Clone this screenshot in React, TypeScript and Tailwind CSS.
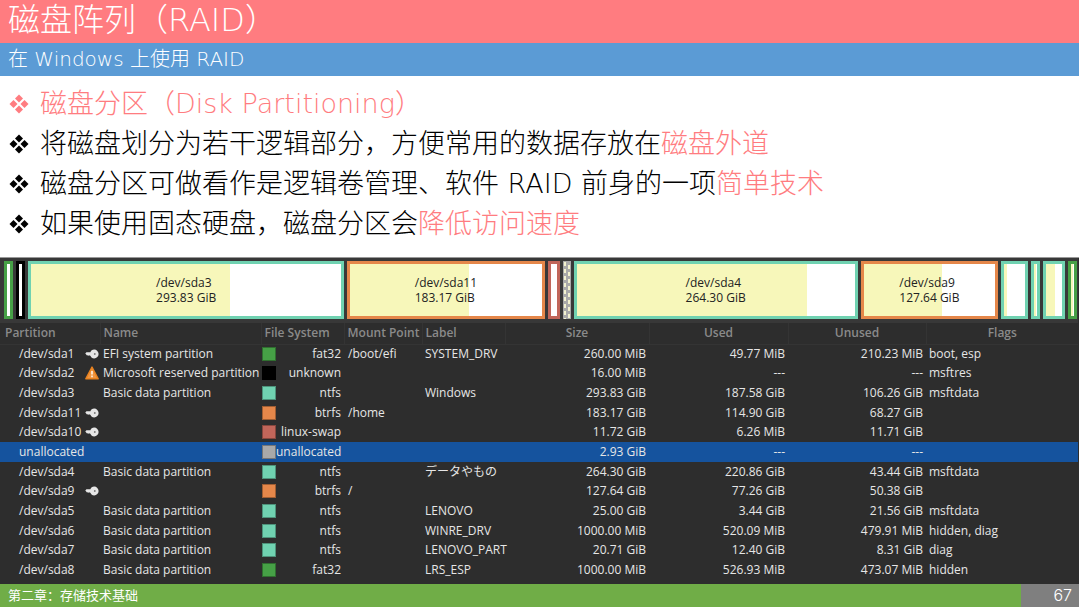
import { useState } from 'react'

// ── Data ──────────────────────────────────────────────────────────────────────

type Partition = {
  device: string
  icon?: 'key' | 'warning'
  name?: string
  color: string
  fs: string
  mount?: string
  label?: string
  size: string
  used: string
  unused: string
  flags?: string
}

const GREEN = 'bg-[#46a046]'
const TEAL = 'bg-[#70d2b1]'
const ORANGE = 'bg-[#e5874a]'
const RED = 'bg-[#c1665a]'

const PARTITIONS: Partition[] = [
  { device: '/dev/sda1', icon: 'key', name: 'EFI system partition', color: GREEN, fs: 'fat32', mount: '/boot/efi', label: 'SYSTEM_DRV', size: '260.00 MiB', used: '49.77 MiB', unused: '210.23 MiB', flags: 'boot, esp' },
  { device: '/dev/sda2', icon: 'warning', name: 'Microsoft reserved partition', color: 'bg-black', fs: 'unknown', size: '16.00 MiB', used: '---', unused: '---', flags: 'msftres' },
  { device: '/dev/sda3', name: 'Basic data partition', color: TEAL, fs: 'ntfs', label: 'Windows', size: '293.83 GiB', used: '187.58 GiB', unused: '106.26 GiB', flags: 'msftdata' },
  { device: '/dev/sda11', icon: 'key', color: ORANGE, fs: 'btrfs', mount: '/home', size: '183.17 GiB', used: '114.90 GiB', unused: '68.27 GiB' },
  { device: '/dev/sda10', icon: 'key', color: RED, fs: 'linux-swap', size: '11.72 GiB', used: '6.26 MiB', unused: '11.71 GiB' },
  { device: 'unallocated', color: 'bg-[#a9a9a9]', fs: 'unallocated', size: '2.93 GiB', used: '---', unused: '---' },
  { device: '/dev/sda4', name: 'Basic data partition', color: TEAL, fs: 'ntfs', label: 'データやもの', size: '264.30 GiB', used: '220.86 GiB', unused: '43.44 GiB', flags: 'msftdata' },
  { device: '/dev/sda9', icon: 'key', color: ORANGE, fs: 'btrfs', mount: '/', size: '127.64 GiB', used: '77.26 GiB', unused: '50.38 GiB' },
  { device: '/dev/sda5', name: 'Basic data partition', color: TEAL, fs: 'ntfs', label: 'LENOVO', size: '25.00 GiB', used: '3.44 GiB', unused: '21.56 GiB', flags: 'msftdata' },
  { device: '/dev/sda6', name: 'Basic data partition', color: TEAL, fs: 'ntfs', label: 'WINRE_DRV', size: '1000.00 MiB', used: '520.09 MiB', unused: '479.91 MiB', flags: 'hidden, diag' },
  { device: '/dev/sda7', name: 'Basic data partition', color: TEAL, fs: 'ntfs', label: 'LENOVO_PART', size: '20.71 GiB', used: '12.40 GiB', unused: '8.31 GiB', flags: 'diag' },
  { device: '/dev/sda8', name: 'Basic data partition', color: GREEN, fs: 'fat32', label: 'LRS_ESP', size: '1000.00 MiB', used: '526.93 MiB', unused: '473.07 MiB', flags: 'hidden' },
]

type Block = {
  device: string
  size?: string
  weight: number // share of the disk bar
  used: number // percent
  border: string
}

const BLOCKS: Block[] = [
  { device: '/dev/sda1', weight: 9, used: 0, border: 'border-[#46a046]' },
  { device: '/dev/sda2', weight: 9, used: 0, border: 'border-black' },
  { device: '/dev/sda3', size: '293.83 GiB', weight: 316, used: 64, border: 'border-[#70d2b1]' },
  { device: '/dev/sda11', size: '183.17 GiB', weight: 197, used: 62, border: 'border-[#e5874a]' },
  { device: '/dev/sda10', weight: 12, used: 0, border: 'border-[#c1665a]' },
  { device: 'unallocated', weight: 8, used: 0, border: '' },
  { device: '/dev/sda4', size: '264.30 GiB', weight: 284, used: 83, border: 'border-[#70d2b1]' },
  { device: '/dev/sda9', size: '127.64 GiB', weight: 137, used: 60, border: 'border-[#e5874a]' },
  { device: '/dev/sda5', weight: 27, used: 14, border: 'border-[#70d2b1]' },
  { device: '/dev/sda6', weight: 9, used: 52, border: 'border-[#70d2b1]' },
  { device: '/dev/sda7', weight: 22, used: 55, border: 'border-[#70d2b1]' },
  { device: '/dev/sda8', weight: 9, used: 53, border: 'border-[#46a046]' },
]

const COLUMNS = [
  { title: 'Partition', width: 'w-[100px]', align: 'text-left pl-[5px]' },
  { title: 'Name', width: 'w-[161px]', align: 'text-left pl-[3px]' },
  { title: 'File System', width: 'w-[83px]', align: 'text-left pl-[3px]' },
  { title: 'Mount Point', width: 'w-[78px]', align: 'text-left pl-[3px]' },
  { title: 'Label', width: 'w-[83px]', align: 'text-left pl-[3px]' },
  { title: 'Size', width: 'w-[144px]', align: 'text-center' },
  { title: 'Used', width: 'w-[139px]', align: 'text-center' },
  { title: 'Unused', width: 'w-[138px]', align: 'text-center' },
  { title: 'Flags', width: '', align: 'text-center' },
]

// ── Icons ─────────────────────────────────────────────────────────────────────

function DiamondBullet() {
  return (
    <svg viewBox="0 0 20 20" className="size-5 flex-none" fill="currentColor" aria-hidden>
      <path d="M10 0.5 14 4.5 10 8.5 6 4.5ZM10 11.5 14 15.5 10 19.5 6 15.5ZM4.5 6 8.5 10 4.5 14 0.5 10ZM15.5 6 19.5 10 15.5 14 11.5 10Z" />
    </svg>
  )
}

function KeyIcon() {
  return (
    <svg viewBox="0 0 14 14" className="size-[14px]" aria-hidden>
      <path d="M0.3 6.6 1.4 5.2H5.4C6 3.6 7.2 2.6 9.2 2.6a4.4 4.4 0 0 1 0 8.8C7.2 11.4 6 10.4 5.4 8.8H5L4.4 8.2 3.6 8.8 2.8 8.2 2 8.5Z" fill="#e6e6e6" />
      <circle cx="9.8" cy="7" r="0.9" fill="#777" />
    </svg>
  )
}

function WarningIcon() {
  return (
    <svg viewBox="0 0 14 14" className="size-[14px]" aria-hidden>
      <path d="M7 1 13.2 12.8H0.8Z" fill="#f0953f" stroke="#e8821f" strokeWidth="1.4" strokeLinejoin="round" />
      <path d="M6 5h2v3.6H6zM6 9.6h2v1.7H6z" fill="#fbe0c4" />
    </svg>
  )
}

// ── Slide text ────────────────────────────────────────────────────────────────

function Bullets() {
  return (
    <ul className="flex flex-col px-[9px] pt-2 pb-[13px] text-[27px] leading-10 font-light text-black">
      <li className="flex items-center gap-[11px] text-[#ff7c80]">
        <DiamondBullet />
        <span>磁盘分区（Disk Partitioning）</span>
      </li>
      <li className="flex items-center gap-[11px]">
        <DiamondBullet />
        <span>
          将磁盘划分为若干逻辑部分，方便常用的数据存放在<span className="text-[#ff7c80]">磁盘外道</span>
        </span>
      </li>
      <li className="flex items-center gap-[11px]">
        <DiamondBullet />
        <span>
          磁盘分区可做看作是逻辑卷管理、软件 RAID 前身的一项<span className="text-[#ff7c80]">简单技术</span>
        </span>
      </li>
      <li className="flex items-center gap-[11px]">
        <DiamondBullet />
        <span>
          如果使用固态硬盘，磁盘分区会<span className="text-[#ff7c80]">降低访问速度</span>
        </span>
      </li>
    </ul>
  )
}

// ── Disk bar ──────────────────────────────────────────────────────────────────

function DiskBlock({ block }: { block: Block }) {
  if (block.device === 'unallocated') {
    return (
      <div className="overflow-hidden bg-[#a9a9a9]">
        <svg className="h-full w-full" aria-hidden>
          <path d="M2 1V58" stroke="#f3f2cf" strokeWidth="2" strokeDasharray="4 3" />
          <path d="M6 4V58" stroke="#f3f2cf" strokeWidth="2" strokeDasharray="4 3" />
        </svg>
      </div>
    )
  }

  return (
    <div className={`relative flex items-center justify-center border-[3px] bg-white ${block.border}`}>
      <div className="absolute inset-y-0 left-0 bg-[#f7f7ba]" style={{ width: `${block.used}%` }} />
      {block.size && (
        <p className="relative text-xs leading-[15px] text-[#222]">
          {block.device}
          <br />
          {block.size}
        </p>
      )}
    </div>
  )
}

function DiskBar() {
  const columns = BLOCKS.map((b) => `minmax(0, ${b.weight}fr)`).join(' ')

  return (
    <div
      className="grid h-[65px] grid-rows-1 gap-[3px] bg-[#383838] pt-[3px] pr-px pb-1 pl-1"
      style={{ gridTemplateColumns: columns }}
    >
      {BLOCKS.map((b) => (
        <DiskBlock key={b.device} block={b} />
      ))}
    </div>
  )
}

// ── Partition table ───────────────────────────────────────────────────────────

function PartitionTable() {
  const [selected, setSelected] = useState('unallocated')

  return (
    <table className="w-full table-fixed border-collapse text-xs leading-[18px] whitespace-nowrap text-[#e6e6e6]">
      <thead>
        <tr className="h-[21px] border-b border-[#343434]">
          {COLUMNS.map((c) => (
            <th
              key={c.title}
              className={`border-r border-[#343434] p-0 align-middle font-semibold text-[#8a8a8a] last:border-r-0 ${c.width} ${c.align}`}
            >
              {c.title}
            </th>
          ))}
        </tr>
      </thead>
      <tbody>
        {PARTITIONS.map((p) => (
          <tr
            key={p.device}
            onClick={() => setSelected(p.device)}
            className={`h-5 nth-[3n+1]:h-[19px] ${p.device === selected ? 'bg-[#15539e]' : ''}`}
          >
            <td className="p-0 pl-[19px]">
              <div className="flex items-center justify-between pr-px">
                {p.device}
                {p.icon === 'key' && <KeyIcon />}
                {p.icon === 'warning' && <WarningIcon />}
              </div>
            </td>
            <td className="p-0 pl-[3px]">{p.name}</td>
            <td className="p-0 pr-[3px] pl-px">
              <div className="flex items-center justify-between">
                <span className={`size-[14px] flex-none border border-black/30 ${p.color}`} />
                {p.fs}
              </div>
            </td>
            <td className="p-0 pl-1">{p.mount}</td>
            <td className="p-0 pl-[3px]">{p.label}</td>
            <td className="p-0 pr-[3px] text-right">{p.size}</td>
            <td className="p-0 pr-[3px] text-right">{p.used}</td>
            <td className="p-0 pr-[3px] text-right">{p.unused}</td>
            <td className="p-0 pl-[3px]">{p.flags}</td>
          </tr>
        ))}
      </tbody>
    </table>
  )
}

// ── Page ──────────────────────────────────────────────────────────────────────

export default function App() {
  return (
    <div className="flex min-h-screen flex-col bg-white pr-px font-['DejaVu_Sans','Noto_Sans_CJK_SC',sans-serif]" lang="zh-CN">
      <header className="font-light text-white">
        <h1 className="bg-[#ff7c80] px-2 pb-[3px] text-[32px] leading-10">磁盘阵列（RAID）</h1>
        <h2 className="bg-[#5b9bd5] px-2 text-xl leading-[33px]">在 Windows 上使用 RAID</h2>
      </header>

      <Bullets />

      <section className="flex-1 border-t border-[#999] bg-[#2d2d2d] pr-px font-['Open_Sans','Noto_Sans_CJK_JP',sans-serif]">
        <DiskBar />
        <PartitionTable />
      </section>

      <footer className="flex h-[23px] items-stretch bg-[#70ad47] text-white">
        <p className="flex-1 px-2 text-[13px] leading-[23px]">第二章：存储技术基础</p>
        <p className="w-[58px] bg-[#7f7f7f] pr-[7px] text-right font-[Inter,sans-serif] text-base leading-[23px] font-light">67</p>
      </footer>
    </div>
  )
}
